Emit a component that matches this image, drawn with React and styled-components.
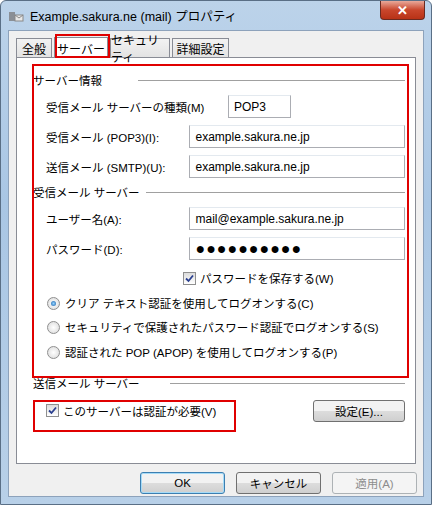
import React from "react";
import styled, { createGlobalStyle } from "styled-components";

const G = createGlobalStyle`
  body{margin:0;font-family:"Liberation Sans","Noto Sans CJK JP",sans-serif;font-size:11px;color:#000;}
`;
const Win = styled.div`
  width:432px;height:505px;box-sizing:border-box;position:relative;
  background:linear-gradient(180deg,#bcd3ea 0%,#a9c6e4 40%,#b8d0e8 100%);
  border:1px solid #5a6f86;border-radius:6px 6px 0 0;
  display:flex;flex-direction:column;padding:0 7px 7px 7px;
`;
const Title = styled.div`
  height:29px;display:flex;align-items:center;gap:6px;font-size:12.5px;color:#000;
`;
const Close = styled.div`
  position:absolute;right:6px;top:0;width:43px;height:18px;border:1px solid #6a2a20;border-top:none;
  border-radius:0 0 4px 4px;background:linear-gradient(#e9a99a,#c9462c 50%,#b83216);
  color:#fff;font-weight:bold;font-size:13px;display:flex;align-items:center;justify-content:center;
`;
const Client = styled.div`
  flex:1;background:#f0f0f0;border:1px solid #8da2bb;padding:5px 7px 0 7px;display:flex;flex-direction:column;position:relative;
`;
const Tabs = styled.div`display:flex;align-items:flex-end;height:21px;padding-left:0;gap:2px;`;
const Tab = styled.div`
  width:${p=>p.$w}px;height:${p=>p.$on?21:19}px;box-sizing:border-box;display:flex;align-items:center;justify-content:center;
  border:1px solid #898c95;border-bottom:none;background:${p=>p.$on?"#fff":"linear-gradient(#f2f2f2,#e3e3e3)"};
  position:relative;margin-bottom:${p=>p.$on?-1:0}px;z-index:${p=>p.$on?2:1};font-size:12px;
`;
const Panel = styled.div`
  background:#fff;border:1px solid #898c95;height:407px;box-sizing:border-box;padding:8px 10px 0 16px;position:relative;
`;
const RedBox = styled.div`
  position:absolute;border:2px solid #e00000;pointer-events:none;z-index:5;
`;
const Group = styled.div`display:flex;align-items:center;height:16px;margin:${p=>p.$mt||6}px 0 0 0;font-size:11.5px;
  &::after{content:"";flex:1;border-top:1px solid #a0a0a0;margin-left:${p=>p.$gap}px;}`;
const Row = styled.div`display:flex;align-items:center;height:23px;margin-top:${p=>p.$mt||7}px;padding-left:${p=>p.$indent}px;
  justify-content:${p=>p.$between?"space-between":"flex-start"};`;
const Lbl = styled.div`width:${p=>p.$w}px;font-size:11.5px;`;
const Input = styled.div`
  width:${p=>p.$w}px;height:23px;box-sizing:border-box;border:1px solid #abadb3;border-top-color:#e3e9ef;
  display:flex;align-items:center;padding-left:5px;font-size:12px;background:#fff;
  ${p=>p.$pw?"letter-spacing:1px;font-size:16px;":""}
`;
const Check = styled.span`
  width:11px;height:11px;border:1px solid #8f8f8f;background:linear-gradient(#dcdcdc,#fff);display:inline-flex;
  align-items:center;justify-content:center;margin-right:4px;flex:none;
`;
const Radio = styled.span`
  width:11px;height:11px;border-radius:50%;border:1px solid #8f8f8f;background:radial-gradient(#fff,#d8d8d8);
  display:inline-flex;align-items:center;justify-content:center;margin-right:5px;flex:none;
  &::after{content:"";width:5px;height:5px;border-radius:50%;background:${p=>p.$on?"radial-gradient(#8fd3ff,#1d5fa8)":"transparent"};}
`;
const Opt = styled.div`display:flex;align-items:center;height:16px;margin-top:${p=>p.$mt}px;padding-left:${p=>p.$indent}px;font-size:11.5px;`;
const Btn = styled.div`
  width:${p=>p.$w}px;height:22px;box-sizing:border-box;border:1px solid ${p=>p.$def?"#3c7fb1":"#707070"};border-radius:3px;
  background:linear-gradient(#f2f2f2 50%,#dddddd 50%,#cfcfcf);display:flex;align-items:center;justify-content:center;
  font-size:11.5px;color:${p=>p.$dis?"#8d8d8d":"#000"};${p=>p.$dis?"background:#f4f4f4;border-color:#adb2b5;":""}
  ${p=>p.$def?"box-shadow:inset 0 0 0 1px #a6dbf7;":""}
`;
const Footer = styled.div`display:flex;justify-content:flex-end;gap:11px;padding:8px 0 0 0;margin-right:-1px;`;

const Tick = () => (
  <svg width="9" height="9" viewBox="0 0 9 9"><path d="M1 4.5 L3.5 7 L8 1.5" stroke="#2a3f8f" strokeWidth="1.8" fill="none"/></svg>
);

export default function App(){
  return (<><G/>
    <Win>
      <Title>
        <svg width="16" height="14" viewBox="0 0 16 14"><rect x="1" y="3" width="6" height="9" fill="#8a8f96"/><rect x="7" y="6" width="8" height="6" fill="#e8e8e8" stroke="#888"/><path d="M7 6 L11 9 L15 6" stroke="#888" fill="none"/></svg>
        Example.sakura.ne (mail) プロパティ
      </Title>
      <Close>✕</Close>
      <Client>
        <Tabs>
          <Tab $w={36}>全般</Tab><Tab $w={54} $on>サーバー</Tab><Tab $w={60}>セキュリティ</Tab><Tab $w={57}>詳細設定</Tab>
        </Tabs>
        <Panel>
          <Group $gap={36}>サーバー情報</Group>
          <Row $indent={13}><Lbl $w={182}>受信メール サーバーの種類(M)</Lbl><Input $w={63}>POP3</Input></Row>
          <Row $indent={13}><Lbl $w={150}>受信メール (POP3)(I):</Lbl><Input $w={225}>example.sakura.ne.jp</Input></Row>
          <Row $indent={13}><Lbl $w={150}>送信メール (SMTP)(U):</Lbl><Input $w={225}>example.sakura.ne.jp</Input></Row>
          <Group $gap={6}>受信メール サーバー</Group>
          <Row $indent={13}><Lbl $w={150}>ユーザー名(A):</Lbl><Input $w={225}>mail@example.sakura.ne.jp</Input></Row>
          <Row $indent={13}><Lbl $w={150}>パスワード(D):</Lbl><Input $w={225} $pw>●●●●●●●●●●</Input></Row>
          <Opt $indent={150} $mt={10}><Check><Tick/></Check>パスワードを保存する(W)</Opt>
          <Opt $indent={14} $mt={9}><Radio $on/>クリア テキスト認証を使用してログオンする(C)</Opt>
          <Opt $indent={14} $mt={8}><Radio/>セキュリティで保護されたパスワード認証でログオンする(S)</Opt>
          <Opt $indent={14} $mt={9}><Radio/>認証された POP (APOP) を使用してログオンする(P)</Opt>
          <Group $gap={30} $mt={15}>送信メール サーバー</Group>
          <Row $indent={13} $between $mt={8}>
            <Opt $indent={0} $mt={0}><Check><Tick/></Check>このサーバーは認証が必要(V)</Opt>
            <Btn $w={92}>設定(E)...</Btn>
          </Row>
          <RedBox style={{left:15,top:6,width:373,height:310}}/>
          <RedBox style={{left:16,top:342,width:199,height:28}}/>
        </Panel>
        <Footer>
          <Btn $w={85} $def>OK</Btn><Btn $w={85}>キャンセル</Btn><Btn $w={85} $dis>適用(A)</Btn>
        </Footer>
        <RedBox style={{left:46,top:3,width:51,height:20}}/>
      </Client>
    </Win>
  </>);
}
